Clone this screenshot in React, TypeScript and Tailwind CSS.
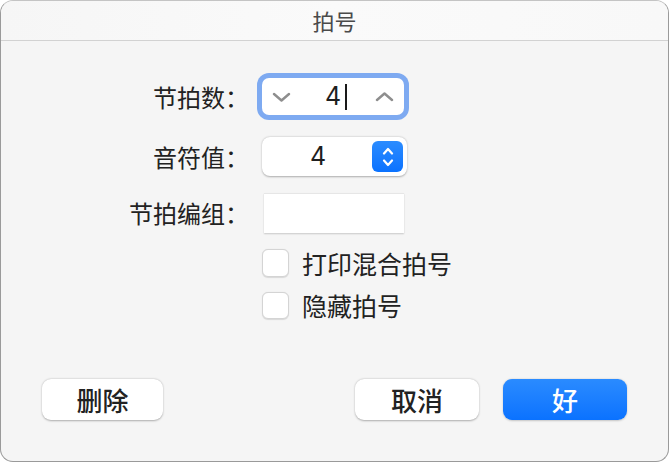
import React from "react";

const CJK = "font-['Noto_Sans_CJK_SC','Noto_Sans',sans-serif]";

function ChevronDown({ className }: { className?: string }) {
  return (
    <svg width="19" height="10" viewBox="0 0 19 10" className={className}>
      <path d="M2 2 L9.5 8.5 L17 2" fill="none" stroke="currentColor" strokeWidth="2.4" strokeLinecap="round" strokeLinejoin="round" />
    </svg>
  );
}
function ChevronUp({ className }: { className?: string }) {
  return (
    <svg width="19" height="10" viewBox="0 0 19 10" className={className}>
      <path d="M2 8 L9.5 1.5 L17 8" fill="none" stroke="currentColor" strokeWidth="2.4" strokeLinecap="round" strokeLinejoin="round" />
    </svg>
  );
}

function Label({ children }: { children: React.ReactNode }) {
  return (
    <div className={`w-[248px] text-right text-[24px] leading-none text-[#222] ${CJK}`}>{children}</div>
  );
}

export default function App() {
  return (
    <div className="w-[670px] h-[463px] bg-white">
      <div className="w-[669px] h-[462px] border border-[#9a9a9a] border-t-[#c4c4c4] rounded-[13px] overflow-hidden flex flex-col bg-[#f5f5f5]">
        {/* title bar */}
        <div className={`h-[40px] shrink-0 border-b border-[#d2d2d2] bg-gradient-to-r from-[#f6f6f6] via-[#fafafa] to-[#f8f8f8] flex items-center justify-center text-[22px] text-[#4a4a4a] ${CJK}`}>
          拍号
        </div>

        {/* body */}
        <div className="flex flex-col">
          {/* row 1 */}
          <div className="flex items-center mt-[37px] h-[37px]">
            <Label>节拍数：</Label>
            <div className="ml-[13px] w-[142px] h-[37px] bg-white rounded-[7px] ring-[5px] ring-[#7eaaf1] flex items-center justify-between px-[10px] text-[#8e8e8e]">
              <ChevronDown />
              <div className="flex items-center pl-[6px]">
                <span className="text-[25px] leading-none text-[#1e1e1e] font-['Inter',sans-serif]">4</span>
                <span className="ml-[4px] w-[2px] h-[26px] bg-[#1a1a1a]" />
              </div>
              <ChevronUp />
            </div>
          </div>

          {/* row 2 */}
          <div className="flex items-center mt-[22px] h-[39px]">
            <Label>音符值：</Label>
            <div className="ml-[13px] w-[145px] h-[39px] bg-white rounded-[8px] shadow-[0_0.5px_2px_rgba(0,0,0,0.3)] flex items-center pr-[4px]">
              <div className="flex-1 text-center text-[25px] leading-none text-[#1e1e1e] font-['Inter',sans-serif] pl-[2px]">4</div>
              <div className="w-[31px] h-[31px] rounded-[6px] bg-gradient-to-b from-[#2b8cff] to-[#0a72ff] flex flex-col items-center justify-center gap-[4px] text-white">
                <svg width="12" height="8" viewBox="0 0 12 8">
                  <path d="M2 6.5 L6 2 L10 6.5" fill="none" stroke="currentColor" strokeWidth="2.2" strokeLinecap="round" strokeLinejoin="round" />
                </svg>
                <svg width="12" height="8" viewBox="0 0 12 8">
                  <path d="M2 1.5 L6 6 L10 1.5" fill="none" stroke="currentColor" strokeWidth="2.2" strokeLinecap="round" strokeLinejoin="round" />
                </svg>
              </div>
            </div>
          </div>

          {/* row 3 */}
          <div className="flex items-center mt-[17px] h-[40px]">
            <Label>节拍编组：</Label>
            <div className="ml-[15px] w-[140px] h-[40px] bg-white border-t border-[#e6e6e6] shadow-[0_1px_1.5px_rgba(0,0,0,0.18)]" />
          </div>

          {/* checkbox 1 */}
          <div className="flex items-center mt-[16px] h-[28px] pl-[261px]">
            <div className="w-[27px] h-[28px] bg-white rounded-[6px] border border-[#d4d4d4] shadow-[0_0.5px_1px_rgba(0,0,0,0.12)]" />
            <span className={`ml-[13px] text-[25px] leading-none text-[#222] ${CJK}`}>打印混合拍号</span>
          </div>

          {/* checkbox 2 */}
          <div className="flex items-center mt-[15px] h-[27px] pl-[261px]">
            <div className="w-[27px] h-[27px] bg-white rounded-[6px] border border-[#d4d4d4] shadow-[0_0.5px_1px_rgba(0,0,0,0.12)]" />
            <span className={`ml-[13px] text-[25px] leading-none text-[#222] ${CJK}`}>隐藏拍号</span>
          </div>

          {/* buttons */}
          <div className="flex items-center mt-[60px] px-[41px]">
            <button className={`w-[121px] h-[41px] bg-white rounded-[9px] shadow-[0_0.5px_2px_rgba(0,0,0,0.3)] text-[26px] leading-none font-medium text-[#222] ${CJK}`}>删除</button>
            <div className="flex-1" />
            <button className={`w-[124px] h-[41px] bg-white rounded-[9px] shadow-[0_0.5px_2px_rgba(0,0,0,0.3)] text-[26px] leading-none font-medium text-[#222] ${CJK}`}>取消</button>
            <button className={`ml-[24px] w-[124px] h-[41px] rounded-[9px] bg-gradient-to-b from-[#2a8bff] to-[#0a72ff] shadow-[0_0.5px_2px_rgba(0,0,0,0.2)] text-[26px] leading-none font-medium text-white ${CJK}`}>好</button>
          </div>
        </div>
      </div>
    </div>
  );
}
